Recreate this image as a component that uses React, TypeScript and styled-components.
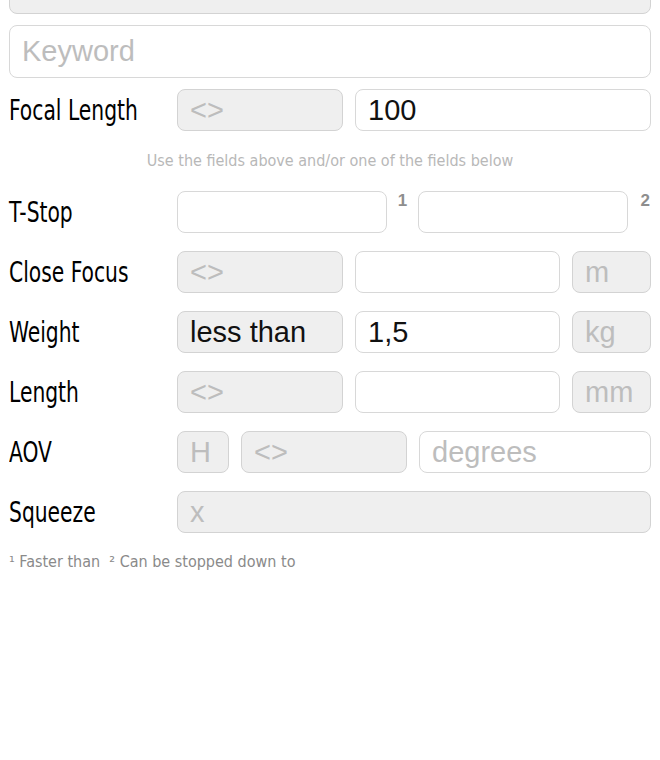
import styled, { createGlobalStyle } from "styled-components";

const GlobalStyle = createGlobalStyle`
    body {
        margin: 0;
        background: #ffffff;
    }
`;

const CONDENSED = `"Liberation Sans Narrow", "DejaVu Sans Condensed", "Liberation Sans", sans-serif`;
const TEXT = `"Liberation Sans", Arial, sans-serif`;

const Page = styled.div`
    display: flex;
    flex-direction: column;
    gap: 18px;
    padding: 0 9px;
    margin-top: -39px;
`;

const TopFields = styled.div`
    display: flex;
    flex-direction: column;
    gap: 11px;
    margin-bottom: -7px;
`;

const Field = styled.input<{ $muted?: boolean; $tall?: boolean }>`
    box-sizing: border-box;
    width: 100%;
    min-width: 0;
    height: ${(p) => (p.$tall ? "53px" : "42px")};
    margin: 0;
    padding: 0 12px;
    border: 1px solid ${(p) => (p.$muted ? "#d3d3d3" : "#d8d8d8")};
    border-radius: 8px;
    background: ${(p) => (p.$muted ? "#efefef" : "#ffffff")};
    font-family: ${TEXT};
    font-size: 29px;
    color: #111111;
    outline: none;

    &::placeholder {
        color: #bdbdbd;
    }
`;

const Picker = styled.div`
    box-sizing: border-box;
    display: flex;
    align-items: center;
    height: 42px;
    padding: 0 12px;
    border: 1px solid #d3d3d3;
    border-radius: 8px;
    background: #efefef;
    font-family: ${TEXT};
    font-size: 29px;
    color: #111111;
`;

const Row = styled.div`
    display: grid;
    grid-template-columns: 168px 1fr;
    align-items: center;
    height: 42px;
`;

// the narrow face isn't installed, so squeeze the condensed one to its width
const Label = styled.div`
    font-family: ${CONDENSED};
    font-size: 28px;
    color: #000000;
    white-space: nowrap;
    transform: scaleX(0.805);
    transform-origin: left center;
`;

const Fields = styled.div<{ $cols: string }>`
    display: grid;
    grid-template-columns: ${(p) => p.$cols};
    column-gap: 12px;
    height: 42px;
`;

const StopFields = styled.div`
    display: grid;
    grid-template-columns: 1fr 31px 1fr 23px;
    height: 42px;
`;

const Sup = styled.span<{ $end?: boolean }>`
    align-self: start;
    padding-top: 1px;
    padding-right: ${(p) => (p.$end ? "1px" : "0")};
    text-align: ${(p) => (p.$end ? "right" : "center")};
    font-family: ${TEXT};
    font-weight: bold;
    font-size: 17px;
    line-height: 17px;
    color: #8e8e8e;
`;

const Hint = styled.div`
    height: 24px;
    line-height: 24px;
    text-align: center;
    font-family: ${CONDENSED};
    font-size: 16px;
    color: #b8b8b8;
`;

const Footnote = styled.div`
    height: 22px;
    line-height: 22px;
    font-family: ${CONDENSED};
    font-size: 16px;
    color: #8a8a8a;
    white-space: pre;
`;

const UnitRow = ({ label, left, value, unit }: { label: string; left?: string; value?: string; unit: string }) => (
    <Row>
        <Label>{label}</Label>
        <Fields $cols="166px 1fr 79px">
            {left ? <Picker>{left}</Picker> : <Field $muted readOnly placeholder="<>" />}
            <Field readOnly defaultValue={value} />
            <Field $muted readOnly placeholder={unit} />
        </Fields>
    </Row>
);

export default function App() {
    return (
        <>
            <GlobalStyle />
            <Page>
                <TopFields>
                    <Field $muted $tall readOnly />
                    <Field $tall readOnly placeholder="Keyword" />
                </TopFields>
                <Row>
                    <Label>Focal Length</Label>
                    <Fields $cols="166px 1fr">
                        <Field $muted readOnly placeholder="<>" />
                        <Field readOnly defaultValue="100" />
                    </Fields>
                </Row>
                <Hint>Use the fields above and/or one of the fields below</Hint>
                <Row>
                    <Label>T-Stop</Label>
                    <StopFields>
                        <Field readOnly />
                        <Sup>1</Sup>
                        <Field readOnly />
                        <Sup $end>2</Sup>
                    </StopFields>
                </Row>
                <UnitRow label="Close Focus" unit="m" />
                <UnitRow label="Weight" left="less than" value="1,5" unit="kg" />
                <UnitRow label="Length" unit="mm" />
                <Row>
                    <Label>AOV</Label>
                    <Fields $cols="52px 166px 1fr">
                        <Field $muted readOnly placeholder="H" />
                        <Field $muted readOnly placeholder="<>" />
                        <Field readOnly placeholder="degrees" />
                    </Fields>
                </Row>
                <Row>
                    <Label>Squeeze</Label>
                    <Fields $cols="1fr">
                        <Field $muted readOnly placeholder="x" />
                    </Fields>
                </Row>
                <Footnote>{"¹ Faster than  ² Can be stopped down to"}</Footnote>
            </Page>
        </>
    );
}
